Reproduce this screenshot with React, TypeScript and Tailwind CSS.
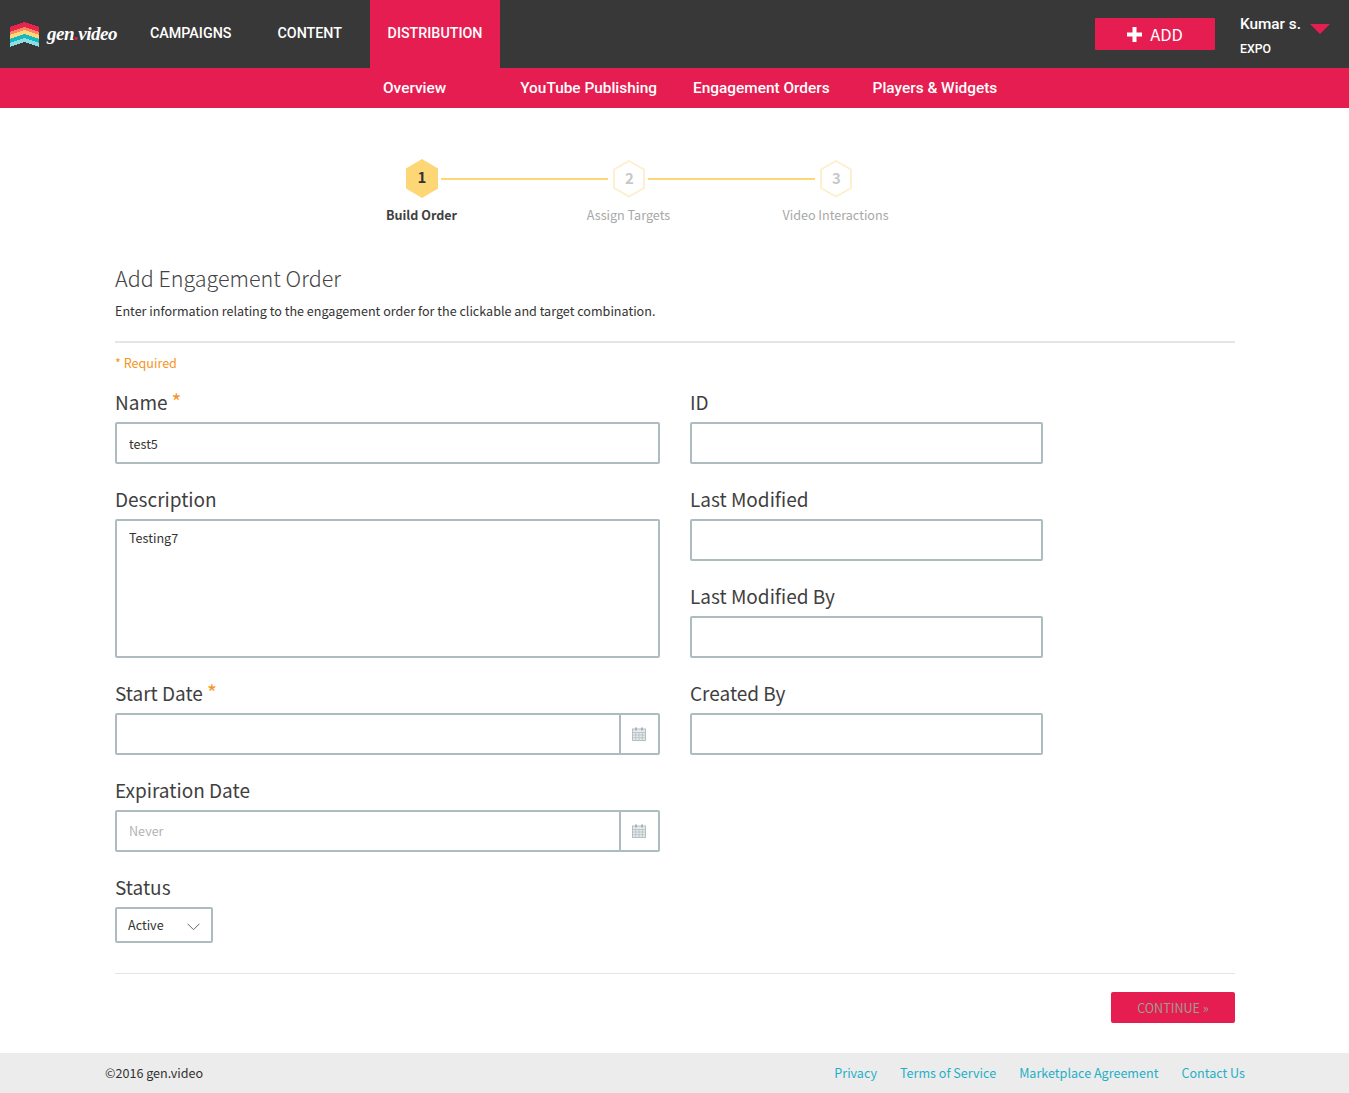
import React from 'react';

const body = { fontFamily: '"Noto Sans CJK JP", "Liberation Sans", sans-serif' };
const heading = { fontFamily: 'Roboto, sans-serif' };

function chevron(y: number, h: number) {
  return `0,${y + 5} 14.5,${y} 29,${y + 5} 29,${y + 5 + h} 14.5,${y + h} 0,${y + 5 + h}`;
}

function Logo() {
  return (
    <svg width="29" height="25" viewBox="0 0 29 25" className="shrink-0" shapeRendering="crispEdges">
      <polygon points={chevron(0, 5)} fill="#e8234f" />
      <polygon points={chevron(5, 3)} fill="#f98a5c" />
      <polygon points={chevron(8, 4)} fill="#fdd77b" />
      <polygon points={chevron(12, 4)} fill="#12b8c2" />
      <polygon points={chevron(16, 4)} fill="#8fdde0" />
    </svg>
  );
}

function Hex({ n, active }: { n: number; active?: boolean }) {
  return (
    <div className="relative w-[32px] h-[39px] shrink-0 flex items-center justify-center">
      <svg width="32" height="39" viewBox="0 0 32 39" className="absolute top-0 left-0">
        {active ? (
          <polygon points="16,0 32,9.5 32,29.5 16,39 0,29.5 0,9.5" fill="#fdd776" />
        ) : (
          <polygon points="16,2 31,10.5 31,29 16,37.5 1,29 1,10.5" fill="#fff" stroke="#fdf0cf" strokeWidth="2" />
        )}
      </svg>
      <span className={`relative text-[15px] font-bold ${active ? '-mt-[2px] text-[#333]' : '-mt-[1px] text-[#c8c8c8] ml-[1px]'}`}>{n}</span>
    </div>
  );
}

function Calendar() {
  return (
    <svg width="14" height="14" viewBox="0 0 14 14" fill="none">
      <rect x="0.5" y="2" width="13" height="11.5" fill="#e6eaeb" stroke="#b4bfc1" />
      <path d="M0.5 5.5h13M0.5 8h13M0.5 10.7h13M3.7 5v8.5M7 5v8.5M10.3 5v8.5" stroke="#b4bfc1" strokeWidth="0.8" />
      <rect x="3" y="0.5" width="2" height="3" fill="#a8b4b6" />
      <rect x="9" y="0.5" width="2" height="3" fill="#a8b4b6" />
    </svg>
  );
}

function Label({ text, required }: { text: string; required?: boolean }) {
  return (
    <label className="block h-[28px] leading-[26px] mb-[5px] text-[19px] text-[#3f3f3f]">
      {text}
      {required && <span className="ml-[4px] text-[#f7941d] text-[21px] leading-none relative">*</span>}
    </label>
  );
}

function TextField({ label, value, required }: { label: string; value?: string; required?: boolean }) {
  return (
    <div className="mb-[22px]">
      <Label text={label} required={required} />
      <input
        readOnly
        value={value ?? ''}
        className="block w-full h-[42px] border-2 border-[#adbdbf] rounded-[2px] px-[12px] text-[12.58px] text-[#333] outline-none"
      />
    </div>
  );
}

function DateField({ label, placeholder, required }: { label: string; placeholder?: string; required?: boolean }) {
  return (
    <div className="mb-[22px]">
      <Label text={label} required={required} />
      <div className="flex h-[42px] border-2 border-[#adbdbf] rounded-[2px]">
        <input
          readOnly
          placeholder={placeholder}
          className="flex-1 min-w-0 px-[12px] pt-[1px] text-[12.58px] text-[#333] placeholder:text-[#b3b3b3] outline-none"
        />
        <div className="w-[39px] pr-[2px] border-l-2 border-[#adbdbf] flex items-center justify-center">
          <Calendar />
        </div>
      </div>
    </div>
  );
}

export default function App() {
  return (
    <div className="min-h-[1093px] flex flex-col bg-white" style={body}>
      <header className="h-[68px] bg-[#383838] flex items-stretch text-white">
        <div className="w-[150px] flex items-center pl-[10px] shrink-0">
          <Logo />
          <span className="ml-[8px] text-[19px] italic font-bold tracking-[-0.5px]" style={{ fontFamily: '"Liberation Serif", serif' }}>
            gen<span className="text-[#e61d50]">.</span>video
          </span>
        </div>
        <nav className="flex items-stretch text-[14.3px] font-medium" style={heading}>
          <a className="flex items-center">CAMPAIGNS</a>
          <a className="flex items-center ml-[46px]">CONTENT</a>
          <a className="flex items-center ml-[28px] w-[130px] justify-center bg-[#e61d50]">DISTRIBUTION</a>
        </nav>
        <div className="ml-auto flex items-start">
          <button className="mt-[18px] w-[120px] h-[32px] bg-[#e61d50] rounded-[1px] flex items-center justify-center text-[16.5px] font-normal">
            <svg width="15" height="15" viewBox="0 0 15 15" className="mr-[8px]">
              <path d="M5.5 0h4v5.5H15v4H9.5V15h-4V9.5H0v-4h5.5z" fill="#fff" />
            </svg>
            ADD
          </button>
          <div className="ml-[25px] w-[109px] relative" style={heading}>
            <div className="mt-[13px] h-[22px] leading-[22px] text-[15.3px] font-medium">Kumar s.</div>
            <div className="mt-[5px] h-[18px] leading-[18px] text-[12.3px] font-medium">EXPO</div>
            <svg width="20" height="10" viewBox="0 0 20 10" className="absolute top-[24px] left-[70px]">
              <polygon points="0,0 20,0 10,10" fill="#e61d50" />
            </svg>
          </div>
        </div>
      </header>

      <div className="h-[40px] bg-[#e61d50] flex items-center pl-[383px] pt-[2px] text-white text-[15.4px] font-medium" style={heading}>
        <a>Overview</a>
        <a className="ml-[74px]">YouTube Publishing</a>
        <a className="ml-[36px]">Engagement Orders</a>
        <a className="ml-[43px]">Players &amp; Widgets</a>
      </div>

      <main className="flex-1 mx-[115px] w-[1120px]">
        <div className="mt-[51px] ml-[291px] flex items-center">
          <Hex n={1} active />
          <div className="ml-[3px] mr-[5px] w-[167px] h-[2px] bg-[#fdd776]" />
          <Hex n={2} />
          <div className="ml-[3px] mr-[5px] w-[167px] h-[2px] bg-[#fdd776]" />
          <Hex n={3} />
        </div>
        <div className="ml-[203px] mt-[7px] grid grid-cols-[207px_207px_207px] text-center text-[12.58px] leading-[20px] text-[#a8a8a8]">
          <div className="font-bold text-[#3f3f3f]">Build Order</div>
          <div>Assign Targets</div>
          <div>Video Interactions</div>
        </div>

        <h1 className="mt-[37px] h-[32px] leading-[32px] text-[21.5px] font-light text-[#444]">Add Engagement Order</h1>
        <p className="mt-[7px] h-[20px] leading-[20px] text-[12.58px] text-[#333]">
          Enter information relating to the engagement order for the clickable and target combination.
        </p>
        <div className="mt-[20px] h-[2px] bg-[#e5e5e5]" />
        <div className="mt-[10px] h-[20px] leading-[20px] text-[12.58px] text-[#f7941d]">* Required</div>

        <div className="mt-[16px] flex gap-[30px]">
          <div className="w-[545px]">
            <TextField label="Name" value="test5" required />
            <div className="mb-[22px]">
              <Label text="Description" />
              <textarea
                readOnly
                value="Testing7"
                className="block w-full h-[139px] border-2 border-[#adbdbf] rounded-[2px] px-[12px] py-[8px] text-[12.58px] text-[#333] outline-none resize-none"
              />
            </div>
            <DateField label="Start Date" required />
            <DateField label="Expiration Date" placeholder="Never" />
            <Label text="Status" />
            <div className="w-[98px] h-[36px] border-2 border-[#adbdbf] rounded-[2px] flex items-center justify-between pl-[11px] pr-[11px] pt-[1px] text-[12.58px] text-[#333]">
              Active
              <svg width="13" height="8" viewBox="0 0 13 8" fill="none" className="mt-[3px]">
                <path d="M0.5 0.7l6 6 6-6" stroke="#666" />
              </svg>
            </div>
          </div>
          <div className="w-[353px]">
            <TextField label="ID" />
            <TextField label="Last Modified" />
            <TextField label="Last Modified By" />
            <TextField label="Created By" />
          </div>
        </div>

        <div className="mt-[30px] h-px bg-[#e5e5e5]" />
        <div className="mt-[18px] flex justify-end">
          <button className="w-[124px] h-[31px] pt-[1px] bg-[#e61d50] rounded-[2px] text-[12.58px] text-[#9d9d92]">CONTINUE »</button>
        </div>
      </main>

      <footer className="h-[40px] bg-[#ececec] flex items-center justify-between pl-[105px] pr-[104px] text-[12.58px]">
        <span className="text-[#333]">©2016 gen.video</span>
        <div className="flex gap-[23px] text-[#1fb0c6]">
          <a>Privacy</a>
          <a>Terms of Service</a>
          <a>Marketplace Agreement</a>
          <a>Contact Us</a>
        </div>
      </footer>
    </div>
  );
}
